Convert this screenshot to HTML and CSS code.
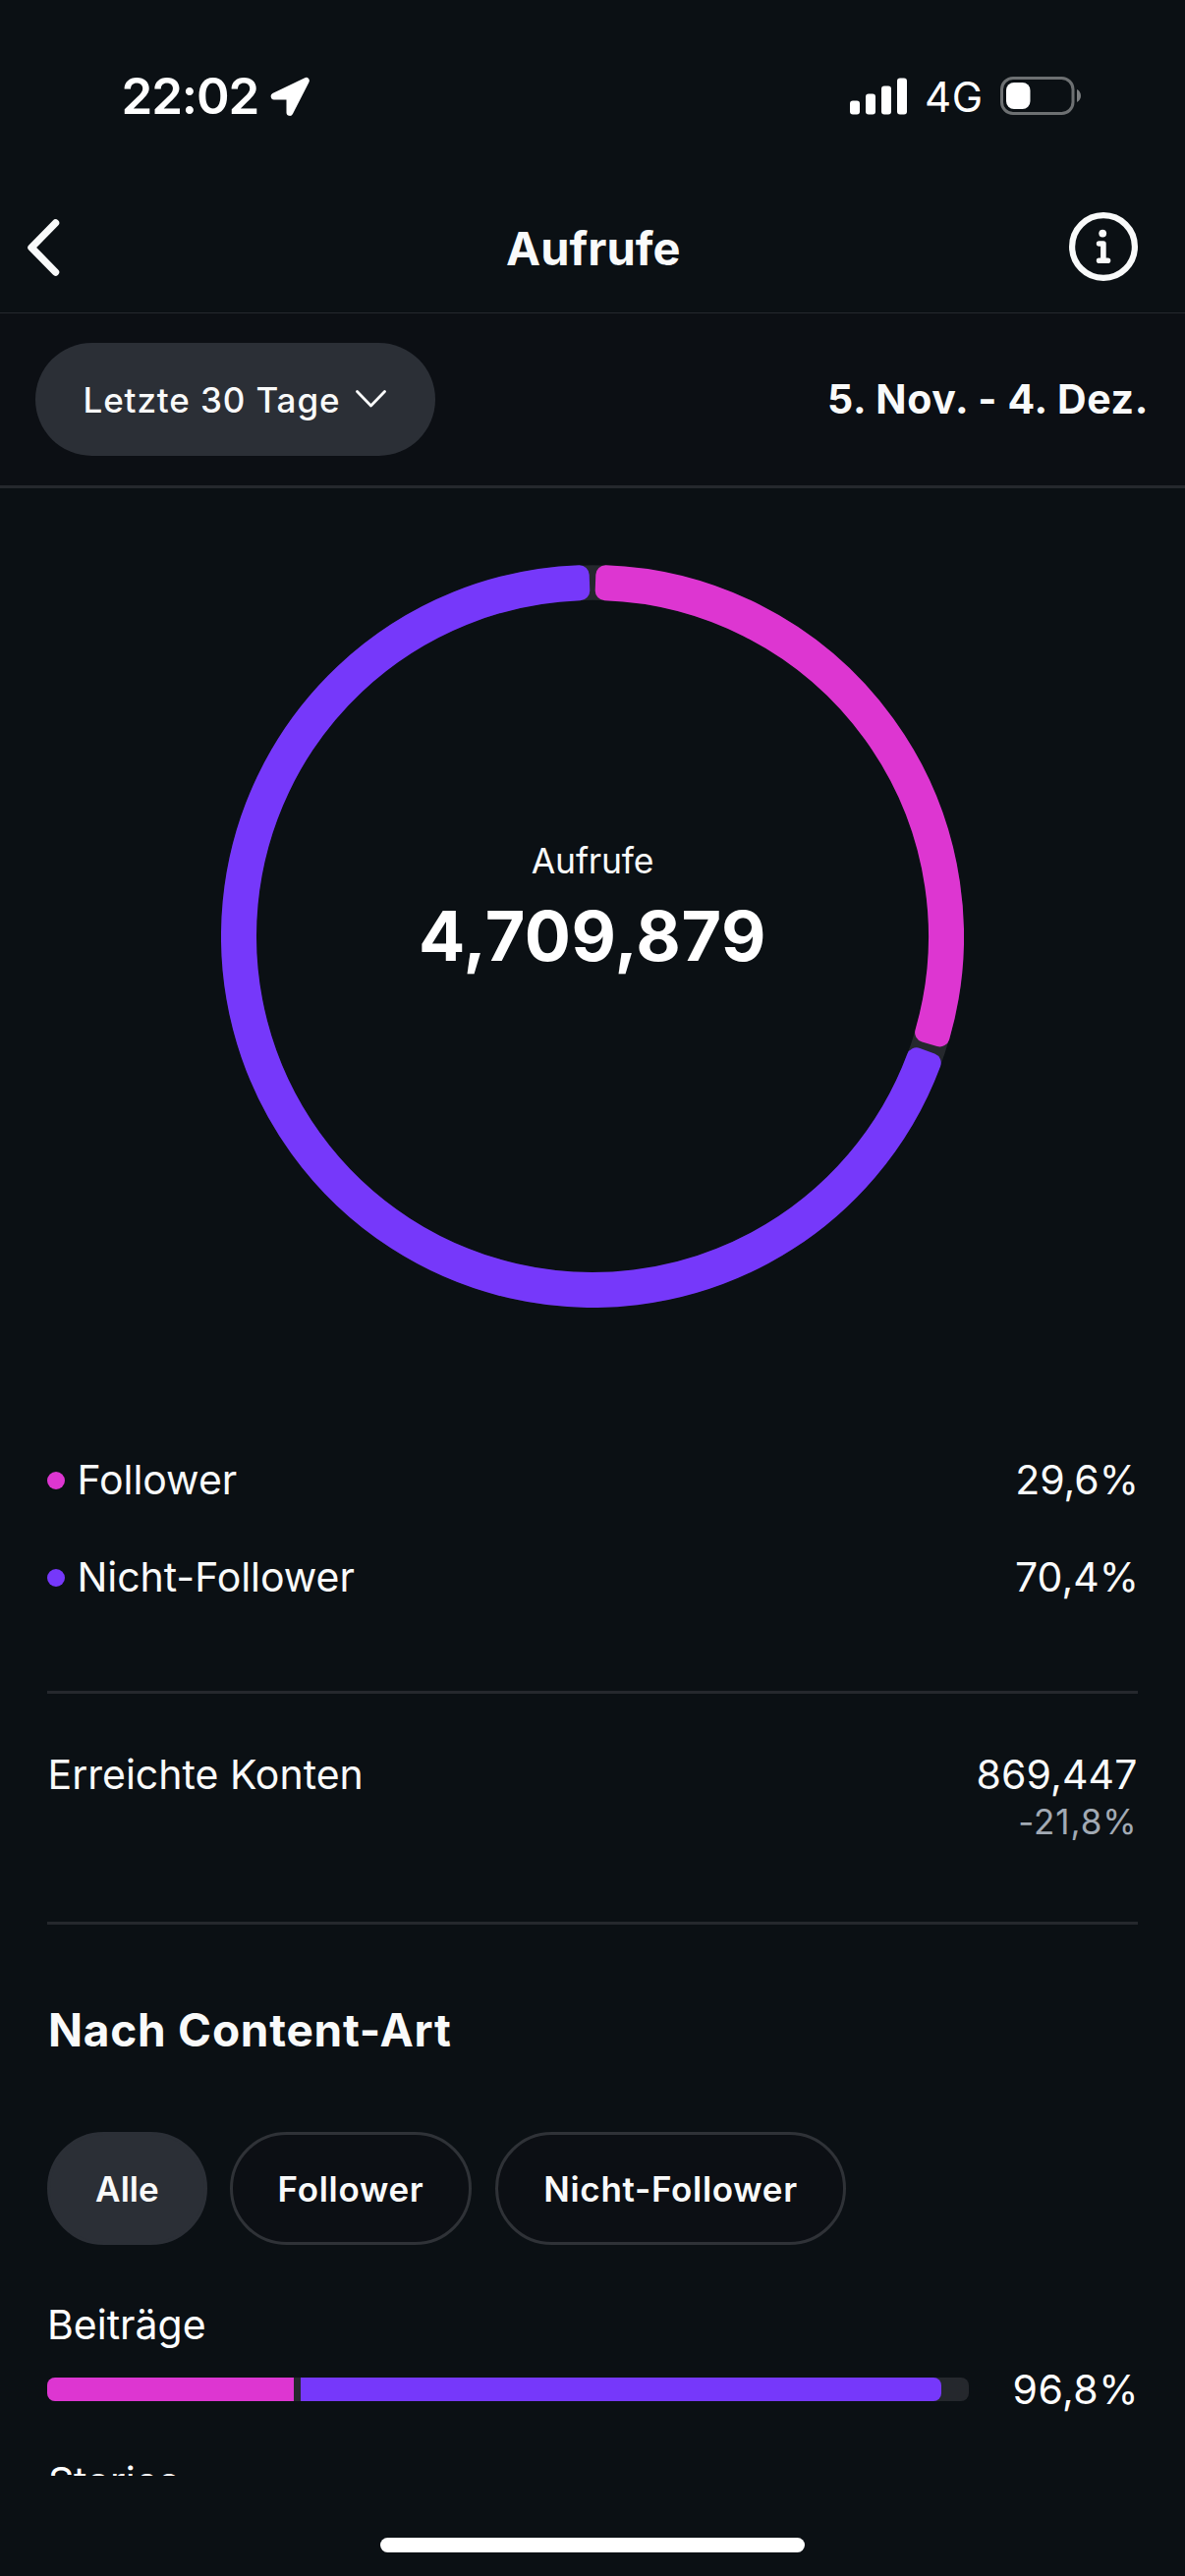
FILE: index.html
```html
<!DOCTYPE html>
<html lang="de">
<head>
<meta charset="utf-8">
<title>Aufrufe</title>
<link rel="stylesheet" href="styles.css">
</head>
<body>
<div class="screen">
  <div class="status">
    <div class="status-left">
      <span class="clock">22:02</span>
      <svg class="location" width="40" height="40" viewBox="0 0 40 40"><path d="M36.300 3.500 3.500 19.200c-.6.3-.4 1.700.3 1.700H19V36.600c0 .9 1.300 1.100 1.700.3L37.200 4.600c.4-.8-.2-1.400-.9-1.100Z" fill="#fff" stroke="#fff" stroke-width="5" stroke-linejoin="round"/></svg>
    </div>
    <div class="status-right">
      <svg class="signal" width="58" height="38" viewBox="0 0 58 38" fill="#fff"><rect x="0" y="23.500" width="10" height="14" rx="3"/><rect x="16" y="16.500" width="10" height="21" rx="3"/><rect x="32" y="8.500" width="10" height="29" rx="3"/><rect x="48" y=".5" width="10" height="37" rx="3"/></svg>
      <span class="network">4G</span>
      <svg class="battery" width="82" height="39" viewBox="0 0 82 39"><rect x="1.500" y="1.500" width="72.500" height="36" rx="11.500" fill="none" stroke="#6d7072" stroke-width="3"/><rect x="6" y="6" width="24.500" height="27" rx="8" fill="#fff"/><path d="M78 13c5.300 2.300 5.300 10.700 0 13Z" fill="#7b7e80"/></svg>
    </div>
  </div>

  <header class="header">
    <svg class="back" width="40" height="64" viewBox="0 0 40 64"><path d="M31.500 7 7 32 31.500 57" fill="none" stroke="#f9fafa" stroke-width="7.500" stroke-linecap="round" stroke-linejoin="round"/></svg>
    <h1 class="title">Aufrufe</h1>
    <svg class="info" width="70" height="70" viewBox="0 0 70 70"><circle cx="35" cy="35" r="31.900" fill="none" stroke="#f9fafa" stroke-width="6.200"/><circle cx="34.200" cy="21.600" r="3.900" fill="#f9fafa"/><path d="M30.600 32h4.300v17.300M30.600 49.300h8.900" fill="none" stroke="#f9fafa" stroke-width="5.600" stroke-linecap="round" stroke-linejoin="round"/></svg>
  </header>

  <div class="filter">
    <button class="period">Letzte 30 Tage
      <svg width="31" height="19" viewBox="0 0 31 19"><path d="m1.500 1.500 14 14.500 14-14.500" fill="none" stroke="#f9fafa" stroke-width="2.800" stroke-linecap="round" stroke-linejoin="round"/></svg>
    </button>
    <span class="range">5. Nov. - 4. Dez.</span>
  </div>

  <main class="content">
    <div class="donut">
      <svg class="ring" width="756" height="756" viewBox="-378 -378 756 756">
        <circle r="360" fill="none" stroke="#25282d" stroke-width="35.600"/>
        <g stroke-width="20" stroke-linejoin="round">
          <path d="M13.290-367.760A368 368 0 0 1 353.480 102.360L338.110 97.910A352 352 0 0 0 12.710-351.770Z" fill="#dd36d1" stroke="#dd36d1"/>
          <path d="M344.690 128.880A368 368 0 1 1-13.290-367.760L-12.710-351.770A352 352 0 1 0 329.710 123.270Z" fill="#7638fa" stroke="#7638fa"/>
        </g>
      </svg>
      <div class="total">
        <div class="total-label">Aufrufe</div>
        <div class="total-value">4,709,879</div>
      </div>
    </div>

    <section class="legend">
      <div class="legend-row"><span class="dot dot-pink"></span><span class="name">Follower</span><span class="percent">29,6%</span></div>
      <div class="legend-row"><span class="dot dot-violet"></span><span class="name">Nicht-Follower</span><span class="percent">70,4%</span></div>
    </section>

    <section class="reach">
      <span class="reach-name">Erreichte Konten</span>
      <div class="reach-values">
        <div class="reach-value">869,447</div>
        <div class="reach-change">-21,8%</div>
      </div>
    </section>

    <section class="types">
      <h2 class="types-title">Nach Content-Art</h2>
      <div class="chips">
        <button class="chip chip-active">Alle</button>
        <button class="chip chip-follower">Follower</button>
        <button class="chip chip-other">Nicht-Follower</button>
      </div>
      <div class="type-name">Beiträge</div>
      <div class="type-row">
        <div class="bar">
          <div class="bar-pink" style="width: 251px"></div>
          <div class="bar-violet" style="width: 652px"></div>
        </div>
        <span class="percent type-percent">96,8%</span>
      </div>
      <div class="type-name type-name-next">Stories</div>
    </section>
  </main>

  <footer class="home"><div class="home-bar"></div></footer>
</div>
</body>
</html>
```
FILE: styles.css
```css
* {
  box-sizing: border-box;
}

body {
  margin: 0;
  background: #0b1014;
  color: #f9fafa;
  font: 400 41px/50px "Inter", sans-serif;
}

h1, h2 {
  margin: 0;
  font-weight: 700;
}

button {
  margin: 0;
  font: inherit;
  color: inherit;
  border: 0;
}

svg {
  display: block;
  flex: none;
}

.screen {
  width: 1206px;
  height: 2622px;
  overflow: hidden;
  white-space: nowrap;
}

/* Status bar */
.status {
  height: 196px;
  display: flex;
  justify-content: space-between;
  align-items: center;
  padding: 0 106px 0 123.5px;
  color: #fff;
}

.status-left,
.status-right {
  display: flex;
  align-items: center;
}

.clock {
  font-size: 51px;
  font-weight: 600;
  letter-spacing: -1.1px;
}

.location {
  margin-left: 12px;
}

.signal {
  margin-top: -1px;
}

.network {
  font-size: 42px;
  letter-spacing: 0.8px;
  margin: 2px 17px 0 18px;
}

.battery {
  margin-top: -1px;
}

/* Header */
.header {
  height: 123px;
  display: flex;
  justify-content: space-between;
  align-items: center;
  padding: 0 48.5px 8px 25px;
  border-bottom: 1px solid #25282d;
}

.title {
  font-size: 47px;
  letter-spacing: 0.05px;
  margin-left: 55px;
}

.info {
  margin-top: -4px;
}

.back {
  margin-top: -3px;
}

/* Date filter */
.filter {
  height: 178px;
  display: flex;
  justify-content: space-between;
  align-items: center;
  padding: 0 37px 0 36px;
  background: #0c0f14;
  border-bottom: 3px solid #25282d;
}

.period {
  width: 407px;
  height: 115px;
  display: flex;
  align-items: center;
  gap: 15.5px;
  padding: 0 0 0 48.5px;
  border-radius: 58px;
  background: #2b2f36;
  font-size: 35px;
  font-weight: 500;
  letter-spacing: 0.88px;
}

.range {
  margin-top: -2px;
  font-weight: 700;
  letter-spacing: 0.65px;
}

/* Scrolling content */
.content {
  height: 2023px;
  padding: 78px 48px 0;
  overflow: hidden;
}

.donut {
  display: grid;
  justify-items: center;
}

.ring,
.total {
  grid-area: 1 / 1;
}

.total {
  padding-top: 280px;
  text-align: center;
}

.total-label {
  font-size: 35.5px;
  line-height: 44px;
  letter-spacing: -0.2px;
}

.total-value {
  margin-top: 12px;
  font-size: 70px;
  font-weight: 700;
  line-height: 84px;
  letter-spacing: 0.53px;
  color: #fff;
}

.legend {
  margin-top: 126px;
  padding-bottom: 66px;
  border-bottom: 3px solid #25282d;
}

.legend-row {
  height: 99px;
  display: flex;
  align-items: center;
}

.dot {
  width: 18px;
  height: 18px;
  border-radius: 50%;
}

.dot-pink {
  background: #dd36d1;
}

.dot-violet {
  background: #7638fa;
}

.name,
.legend .percent {
  margin-top: -2px;
}

.name {
  margin-left: 12.5px;
  letter-spacing: -0.05px;
}

.percent {
  margin-left: auto;
  margin-right: -1px;
}

.reach {
  display: flex;
  justify-content: space-between;
  padding: 57px 0 78px;
  border-bottom: 3px solid #25282d;
}

.reach-name {
  margin-left: 0.5px;
}

.reach-values {
  margin-right: 0.5px;
  text-align: right;
}

.reach-value {
  letter-spacing: 0.12px;
}

.reach-change {
  font-size: 35px;
  line-height: 47px;
  letter-spacing: 0.9px;
  color: #a2aab4;
}

.types-title {
  margin: 77px 0 0 1px;
  font-size: 46px;
  line-height: 60px;
  letter-spacing: 0.75px;
}

.chips {
  display: flex;
  margin-top: 74px;
}

.chip {
  height: 115px;
  display: flex;
  align-items: center;
  justify-content: center;
  padding: 1px 0 0;
  border: 3px solid #2f3237;
  border-radius: 58px;
  background: #0c0f14;
  font-size: 35px;
  font-weight: 600;
  letter-spacing: 0.7px;
}

.chip-active {
  width: 163px;
  border-color: #2b2f36;
  background: #2b2f36;
  letter-spacing: 0.07px;
}

.chip-follower {
  width: 246px;
  margin-left: 23px;
}

.chip-other {
  width: 357px;
  margin-left: 24px;
}

.type-name {
  margin-top: 56px;
  color: #fff;
}

.type-row {
  display: flex;
  align-items: center;
  margin-top: 16px;
  color: #fff;
}

.type-percent {
  letter-spacing: 0.5px;
}

.bar {
  width: 938px;
  height: 24px;
  display: flex;
  gap: 6.5px;
  border-radius: 8px;
  overflow: hidden;
  background: #25282d;
}

.bar-pink {
  background: #dd36d1;
}

.bar-violet {
  background: #7638fa;
  border-radius: 0 8px 8px 0;
}

.type-name-next {
  margin: 44px 0 0 1px;
  letter-spacing: -0.3px;
}

/* Home indicator */
.home {
  height: 102px;
  padding-top: 63px;
}

.home-bar {
  width: 432px;
  height: 15px;
  margin: 0 auto;
  border-radius: 8px;
  background: #fff;
}
```
